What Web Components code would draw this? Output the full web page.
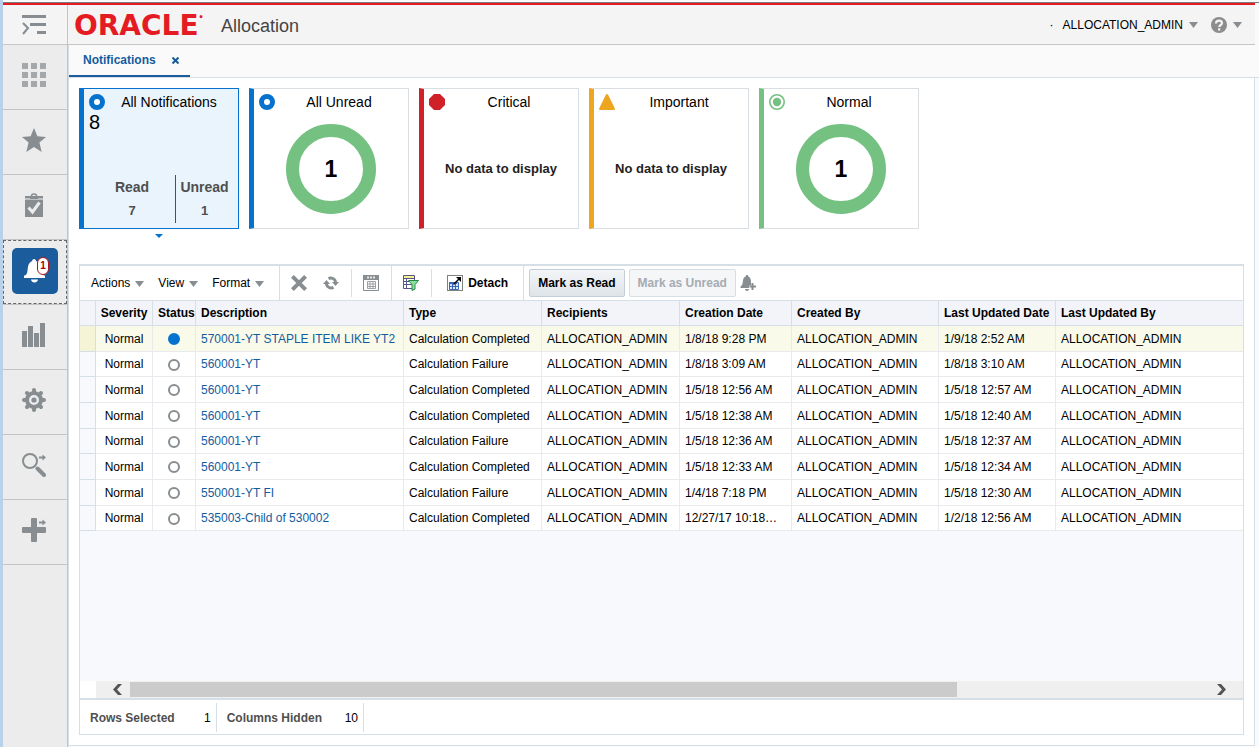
<!DOCTYPE html>
<html lang="en">
<head>
<meta charset="utf-8">
<meta name="viewport" content="width=device-width, initial-scale=1">
<title>Allocation - Notifications</title>
<style>
    :root {
        --line: #d6dfe6;
        --blue: #0572ce;
        --link: #145c9e;
        --gray: #878d90;
    }
    body {
        margin: 0;
        font: 12px/16px "Liberation Sans", Arial, sans-serif;
        color: #000;
    }
</style>
</head>
<body>
<allocation-app></allocation-app>

<script>
const ICONS = {
    menu: `<svg width="26" height="22" viewBox="0 0 26 22"><path fill="#878d90" d="M1 1h24v3H1zM9 9h16v3H9zM16 17h9v3h-9z"/><path fill="none" stroke="#878d90" stroke-width="2" d="M2 9l5 5-5 6"/></svg>`,
    grid: `<svg width="24" height="24" viewBox="0 0 24 24"><path fill="#a5a8ab" d="M0 0h6v6H0zM9 0h6v6H9zM18 0h6v6h-6zM0 9h6v6H0zM9 9h6v6H9zM18 9h6v6h-6zM0 18h6v6H0zM9 18h6v6H9zM18 18h6v6h-6z"/></svg>`,
    star: `<svg width="24" height="24" viewBox="0 0 24 24"><path fill="#878d90" d="M12 0l3.400 8.300 8.600.600-6.600 5.700 2.300 9.400-7.700-5-7.700 5 2.300-9.400L0 8.900l8.600-.600z"/></svg>`,
    tasks: `<svg width="24" height="26" viewBox="0 0 24 26"><path fill="#878d90" d="M3 4h18v21H3z"/><path fill="#bfc3c5" d="M3 6h18v2H3z"/><path fill="#878d90" d="M8 4h8v3H8z"/><path fill="none" stroke="#878d90" stroke-width="1.500" d="M9.500 4q0-2 2.500-2t2.500 2"/><path fill="none" stroke="#ececec" stroke-width="3" d="M6.500 15.500l4 4.500 7-9.500"/></svg>`,
    bell: `<svg width="24" height="26" viewBox="0 0 24 26"><path fill="#fff" d="M11 1c-1.200 0-1.800 1-1.800 2C5.500 4.500 5 8 4.600 12c-.3 3-1 4.500-2.600 5.500H1V20h21v-2.500h-1c-1.500-1-2.300-2.500-2.500-5.500C18 8 17 4.500 13 3c0-1-.8-2-2-2zM8 21.500h7c0 1.500-1.500 3-3.500 3S8 23 8 21.500z"/></svg>`,
    bars: `<svg width="24" height="24" viewBox="0 0 24 24"><path fill="#878d90" d="M0 8h5v16H0zM6 3h5v21H6zM12 10h5v14h-5zM18 0h5v24h-5z"/></svg>`,
    gear: `<svg width="24" height="24" viewBox="0 0 24 24"><g fill="none" stroke="#878d90"><circle cx="12" cy="12" r="7" stroke-width="4"/><g stroke-width="4" stroke-linecap="round"><path d="M12 4V2M12 20v2M4 12H2M20 12h2M6.300 6.300L5 5M17.700 6.300L19 5M6.300 17.700L5 19M17.700 17.700L19 19"/></g></g><circle cx="12" cy="12" r="2.600" fill="#878d90"/></svg>`,
    search: `<svg width="24" height="24" viewBox="0 0 24 24"><circle cx="8" cy="8" r="7" fill="none" stroke="#878d90" stroke-width="2"/><path stroke="#878d90" stroke-width="4" stroke-linecap="round" d="M15.500 15.500l6.500 6.500"/><path fill="#878d90" d="M17 3.500h3.500V1.500L24 4.500l-3.500 3v-2H17z"/></svg>`,
    plus: `<svg width="24" height="24" viewBox="0 0 24 24"><path fill="#878d90" d="M9 1q0-1 1-1h4q1 0 1 1v8h8q1 0 1 1v4q0 1-1 1h-8v8q0 1-1 1h-4q-1 0-1-1v-8H1q-1 0-1-1v-4q0-1 1-1h8z"/><path fill="#878d90" d="M17 3.500h3.500V1.500L24 4.500l-3.500 3v-2H17z"/></svg>`,
    close: `<svg width="7" height="7" viewBox="0 0 7 7"><path stroke="#145c9e" stroke-width="2" d="M.5.5l6 6M6.500.5l-6 6"/></svg>`,
    caret: `<svg width="9" height="7" viewBox="0 0 9 7"><path fill="#878d90" d="M0 1h9L4.500 7z"/></svg>`,
    help: `<svg width="16" height="16" viewBox="0 0 16 16"><circle cx="8" cy="8" r="8" fill="#8c8c8c"/><path fill="none" stroke="#f4f4f4" stroke-width="2.200" d="M5 6.500C5 4.500 6.300 3.700 8 3.700s3 .9 3 2.400c0 1.900-2.800 1.900-2.800 4"/><path fill="#f4f4f4" d="M7 11.300h2.300v2.200H7z"/></svg>`,
    ring: `<svg width="16" height="16" viewBox="0 0 16 16"><circle cx="8" cy="8" r="5.500" fill="#fff" stroke="#0572ce" stroke-width="5"/></svg>`,
    octagon: `<svg width="16" height="16" viewBox="0 0 16 16"><path fill="#cf2127" d="M5 0h6l5 5v6l-5 5H5l-5-5V5z"/></svg>`,
    triangle: `<svg width="16" height="16" viewBox="0 0 16 16"><path fill="#eea621" d="M7 .6Q8-.6 9 .6l7 14.200q0 1.200-1 1.200H1q-1 0-1-1.200z"/></svg>`,
    target: `<svg width="16" height="16" viewBox="0 0 16 16"><circle cx="8" cy="8" r="7.200" fill="#fff" stroke="#74c182" stroke-width="1.600"/><circle cx="8" cy="8" r="4.200" fill="#74c182"/></svg>`,
    remove: `<svg width="16" height="16" viewBox="0 0 16 16"><path stroke="#878d90" stroke-width="4" d="M1.400 1.400l13.200 13.200M14.600 1.400L1.400 14.600"/></svg>`,
    refresh: `<svg width="16" height="16" viewBox="0 0 16 16"><g fill="none" stroke="#878d90" stroke-width="3"><path d="M5.500 3.600A5 5 0 0 1 12.700 7"/><path d="M10.500 12.400A5 5 0 0 1 3.300 9"/></g><path fill="#878d90" d="M9 7h7l-3.500 4zM0 9h7L3.500 5z"/></svg>`,
    excel: `<svg width="16" height="16" viewBox="0 0 16 16"><path fill="#fff" stroke="#878d90" d="M.5.500h15v15H.500z"/><path fill="#878d90" d="M0 0h16v5H0z"/><path stroke="#e5e7e8" stroke-width="2" stroke-dasharray="2 1" d="M4 2.500h9"/><path fill="none" stroke="#9da2a4" d="M4.500 6.500h8v7h-8zM4 9h9M4 11.500h9M7 6v8M10 6v8"/></svg>`,
    filter: `<svg width="16" height="16" viewBox="0 0 16 16"><path fill="#fff" stroke="#55568e" d="M.5.500h11v13H.500z"/><path fill="#f6ef8c" d="M1 1h10v2H1z"/><path stroke="#55568e" d="M1 3.500h10M1 6.500h10M1 9.500h10M3.500 4v9"/><path fill="#8fe0a0" stroke="#238a45" d="M5.500 5.500h10l-3.500 4v4.500l-3 1.500V9.500z"/></svg>`,
    detach: `<svg width="16" height="16" viewBox="0 0 16 16"><path fill="none" stroke="#000" stroke-dasharray="1 1" d="M.5.500h15v15H.500z"/><path fill="#dce9fb" stroke="#3768b8" d="M2.500 7.500h9v7h-9z"/><path fill="#3768b8" d="M2 7h8v2H2z"/><path stroke="#3768b8" d="M3 11.500h8M5.500 9v5M8.500 9v5"/><path fill="none" stroke="#000" stroke-width="1.500" d="M6.500 9.500L12 4"/><path fill="#000" d="M9 2h5v5z"/></svg>`,
    bellAdd: `<svg width="16" height="16" viewBox="0 0 16 16"><path fill="#878d90" d="M7 0C6 0 5.700.700 5.700 1.500 3.500 2.300 3 4.500 2.800 7 2.600 9.500 2 10.500.500 11.500V13H9v-2.500h2V7.500C11 4.500 10.500 2.300 8.300 1.500 8.300.700 8 0 7 0zM5 14h4c0 1-1 2-2 2s-2-1-2-2z"/><path stroke="#878d90" stroke-width="2" d="M12.500 8v7M9.500 11.500h6.500"/></svg>`,
    left: `<svg width="9" height="11" viewBox="0 0 9 11"><path fill="#555" d="M5 0h4L4 5.500 9 11H5L0 5.500z"/></svg>`,
    right: `<svg width="9" height="11" viewBox="0 0 9 11"><path fill="#555" d="M4 0H0l5 5.500L0 11h4l5-5.500z"/></svg>`
};

const RESET = `
    :host { box-sizing: border-box; }
    *, *::before, *::after { box-sizing: border-box; }
    button {
        margin: 0;
        padding: 0;
        border: none;
        background: none;
        font: inherit;
        color: inherit;
        cursor: pointer;
    }
    svg { display: block; flex: none; }
`;

class BaseElement extends HTMLElement {
    constructor(){
        super();
        this.attachShadow({ mode: "open" });
    }
    connectedCallback(){
        this.shadowRoot.innerHTML = `<style>${RESET}${this.getStyle()}</style>${this.getTemplate()}`;
    }
}

class SvgIcon extends BaseElement {
    getStyle(){
        return `:host { display: inline-flex; flex: none; }`;
    }
    getTemplate(){
        return ICONS[this.getAttribute("name")] || "";
    }
}

class AppHeader extends BaseElement {
    getStyle(){
        return `
            :host {
                display: flex;
                align-items: stretch;
                height: 42px;
                margin-right: 4px;
                border-top: 2px solid #e51b24;
                border-bottom: 1px solid #c6c6c6;
                background: #f4f4f4;
            }
            .toggle {
                display: grid;
                place-items: center;
                width: 65px;
                padding-right: 2px;
                border-right: 1px solid #c4c4c4;
            }
            .brand {
                display: flex;
                flex: 1;
                align-items: center;
                padding: 2px 0 0 6px;
            }
            .logo {
                display: flex;
                width: 147px;
                font: bold 28px/28px "DejaVu Sans", sans-serif;
                color: #e51b24;
            }
            .logo sup { font-size: 8px; line-height: 12px; }
            h1 {
                margin: 0;
                font-size: 18px;
                line-height: 24px;
                font-weight: normal;
                color: #444;
            }
            .user {
                display: flex;
                align-items: center;
                gap: 13px;
                padding-right: 13px;
            }
            .user button {
                display: flex;
                align-items: center;
                gap: 6px;
            }
            .dot { margin-right: -4px; }
        `;
    }
    getTemplate(){
        return `
            <button class="toggle" aria-label="Toggle menu"><svg-icon name="menu"></svg-icon></button>
            <div class="brand">
                <span class="logo">ORACLE<sup>•</sup></span>
                <h1>Allocation</h1>
            </div>
            <div class="user">
                <span class="dot">·</span>
                <button>ALLOCATION_ADMIN <svg-icon name="caret"></svg-icon></button>
                <button aria-label="Help"><svg-icon name="help"></svg-icon><svg-icon name="caret"></svg-icon></button>
            </div>
        `;
    }
}

class NavItem extends BaseElement {
    getStyle(){
        return `
            :host { display: block; border-bottom: 1px solid #c4c4c4; }
            button {
                display: grid;
                place-items: center;
                width: 100%;
                height: 64px;
                padding-right: 2px;
            }
            .tile { position: relative; }
            :host([selected]) button {
                padding: 0 0 2px;
                outline: 1px dashed #666;
                outline-offset: -1px;
            }
            :host([selected]) .tile {
                display: grid;
                place-items: center;
                width: 46px;
                height: 46px;
                border-radius: 5px;
                background: #1a5c9c;
            }
            .badge {
                position: absolute;
                top: 9px;
                left: 25px;
                width: 12px;
                height: 18px;
                border: 1px solid #b3131b;
                border-radius: 6px;
                background: #fff;
                font: bold 10px/15px "Liberation Sans", sans-serif;
                text-align: center;
                color: #a00;
            }
        `;
    }
    getTemplate(){
        const count = this.getAttribute("count");
        return `
            <button aria-label="${this.getAttribute("label")}">
                <span class="tile">
                    <svg-icon name="${this.getAttribute("icon")}"></svg-icon>
                    ${count ? `<span class="badge">${count}</span>` : ""}
                </span>
            </button>
        `;
    }
}

class NavRail extends BaseElement {
    getStyle(){
        return `
            :host {
                display: block;
                background: #ececec;
                border-right: 1px solid #c4c4c4;
            }
            nav { display: flex; flex-direction: column; }
        `;
    }
    getTemplate(){
        return `<nav><slot></slot></nav>`;
    }
}

class TabBar extends BaseElement {
    getStyle(){
        return `
            :host {
                display: flex;
                height: 33px;
                border-bottom: 1px solid var(--line);
                background: #fafafa;
            }
            .tab {
                display: flex;
                align-items: center;
                gap: 16px;
                padding: 0 11px 0 14px;
                border-bottom: 2px solid #1a5c9c;
                font-weight: bold;
                color: var(--link);
            }
        `;
    }
    getTemplate(){
        return `
            <div class="tab">
                <slot></slot>
                <button aria-label="Close tab"><svg-icon name="close"></svg-icon></button>
            </div>
        `;
    }
}

class NotificationCard extends BaseElement {
    getStyle(){
        return `
            :host {
                display: block;
                width: 160px;
                --accent: var(--blue);
            }
            :host([severity="critical"]) { --accent: #cf2127; }
            :host([severity="important"]) { --accent: #eea621; }
            :host([severity="normal"]) { --accent: #74c182; }
            .card {
                display: flex;
                flex-direction: column;
                width: 100%;
                height: 141px;
                padding: 5px 5px 0;
                border: 1px solid #d9dee3;
                border-left: 5px solid var(--accent);
                background: #fff;
            }
            :host([selected]) .card {
                border-color: var(--blue);
                background: #e9f4fd;
            }
            .head { display: flex; align-self: stretch; }
            .title {
                flex: 1;
                font-size: 14px;
                text-align: center;
            }
            .content {
                display: grid;
                flex: 1;
                align-self: stretch;
                place-items: center stretch;
            }
            :host([selected])::after {
                content: "";
                display: block;
                width: 0;
                margin: 5px auto 0;
                border: 4px solid transparent;
                border-top-color: var(--blue);
                border-bottom: none;
            }
        `;
    }
    getTemplate(){
        return `
            <button class="card">
                <span class="head">
                    <svg-icon name="${this.getAttribute("icon")}"></svg-icon>
                    <span class="title">${this.getAttribute("title-text")}</span>
                </span>
                <span class="content"><slot></slot></span>
            </button>
        `;
    }
}

class DonutCount extends BaseElement {
    getStyle(){
        return `
            :host {
                display: grid;
                place-items: center;
                justify-self: center;
                width: 90px;
                height: 90px;
                border: 13px solid #74c182;
                border-radius: 50%;
                font-size: 23px;
                line-height: 28px;
                font-weight: bold;
            }
        `;
    }
    getTemplate(){
        return `<slot></slot>`;
    }
}

class EmptyMessage extends BaseElement {
    getStyle(){
        return `
            :host {
                display: block;
                font-size: 13px;
                font-weight: bold;
                text-align: center;
                color: #222;
            }
        `;
    }
    getTemplate(){
        return `No data to display`;
    }
}

class ReadSummary extends BaseElement {
    getStyle(){
        return `
            :host {
                display: flex;
                flex-direction: column;
                justify-content: space-between;
                align-self: stretch;
                padding-bottom: 5px;
            }
            .total { font-size: 20px; line-height: 24px; text-align: left; }
            .counts {
                display: grid;
                grid-template-columns: 86px 1fr;
                font-size: 14px;
                line-height: 24px;
                font-weight: bold;
                text-align: center;
                color: #4f4f4f;
            }
            .counts > span { display: grid; }
            .counts > span + span { border-left: 1px solid #4f4f4f; }
            .num { font-size: 13px; }
        `;
    }
    getTemplate(){
        return `
            <span class="total">${this.getAttribute("total")}</span>
            <span class="counts">
                <span>Read <span class="num">${this.getAttribute("read")}</span></span>
                <span>Unread <span class="num">${this.getAttribute("unread")}</span></span>
            </span>
        `;
    }
}

class TableToolbar extends BaseElement {
    getStyle(){
        return `
            :host {
                display: flex;
                height: 34px;
                background: #fff;
            }
            .group {
                display: flex;
                align-items: center;
                gap: 16px;
                padding: 0 12px 0 11px;
                border-right: 1px solid var(--line);
            }
            .group.menus { gap: 14px; padding-right: 15px; }
            .group.short { margin: 3px 0; }
            .group.wide { padding: 0 15px; }
            .group.last { gap: 4px; padding: 0 5px; border: none; }
            .group button { display: flex; align-items: center; gap: 5px; }
            .bold { font-weight: bold; }
            .group .push {
                height: 28px;
                padding: 0 8px;
                border: 1px solid #c4ced7;
                border-radius: 2px;
                background: linear-gradient(#f3f5f8, #dfe4e9);
                font-weight: bold;
            }
            .group .push:disabled {
                border-color: #d6dfe6;
                background: #f4f6f8;
                color: #a6abb0;
                cursor: default;
            }
        `;
    }
    getTemplate(){
        return `
            <div class="group menus">
                <button>Actions <svg-icon name="caret"></svg-icon></button>
                <button>View <svg-icon name="caret"></svg-icon></button>
                <button>Format <svg-icon name="caret"></svg-icon></button>
            </div>
            <div class="group short">
                <button aria-label="Delete"><svg-icon name="remove"></svg-icon></button>
                <button aria-label="Refresh"><svg-icon name="refresh"></svg-icon></button>
            </div>
            <div class="group">
                <button aria-label="Export to Excel"><svg-icon name="excel"></svg-icon></button>
            </div>
            <div class="group short">
                <button aria-label="Query by Example"><svg-icon name="filter"></svg-icon></button>
            </div>
            <div class="group wide">
                <button class="bold"><svg-icon name="detach"></svg-icon> Detach</button>
            </div>
            <div class="group last">
                <button class="push">Mark as Read</button>
                <button class="push" disabled>Mark as Unread</button>
                <button aria-label="Add notification"><svg-icon name="bellAdd"></svg-icon></button>
            </div>
        `;
    }
}

const USER = "ALLOCATION_ADMIN";
const ROWS = [
    ["570001-YT STAPLE ITEM LIKE YT2", "Calculation Completed", "1/8/18 9:28 PM", "1/9/18 2:52 AM"],
    ["560001-YT", "Calculation Failure", "1/8/18 3:09 AM", "1/8/18 3:10 AM"],
    ["560001-YT", "Calculation Completed", "1/5/18 12:56 AM", "1/5/18 12:57 AM"],
    ["560001-YT", "Calculation Completed", "1/5/18 12:38 AM", "1/5/18 12:40 AM"],
    ["560001-YT", "Calculation Failure", "1/5/18 12:36 AM", "1/5/18 12:37 AM"],
    ["560001-YT", "Calculation Completed", "1/5/18 12:33 AM", "1/5/18 12:34 AM"],
    ["550001-YT FI", "Calculation Failure", "1/4/18 7:18 PM", "1/5/18 12:30 AM"],
    ["535003-Child of 530002", "Calculation Completed", "12/27/17 10:18…", "1/2/18 12:56 AM"]
];

class NotificationTable extends BaseElement {
    getStyle(){
        return `
            :host {
                display: block;
                flex: 1;
                border-top: 1px solid var(--line);
                background: #f7f9fd;
            }
            table {
                width: 100%;
                table-layout: fixed;
                border-spacing: 0;
            }
            th, td {
                height: 26px;
                padding: 0 0 0 5px;
                border-right: 1px solid #e8eaed;
                border-bottom: 1px solid #e8eaed;
                text-align: left;
                white-space: nowrap;
            }
            tr:nth-child(3n+2) td { height: 25px; }
            th {
                height: 25px;
                border-color: var(--line);
                background: #f2f4f9;
            }
            td { background: #fff; }
            th:last-child, td:last-child { border-right: none; }
            td:first-child { border-color: var(--line); background: #f7f9fd; }
            .severity, td.status { padding: 0; text-align: center; }
            .selected td { background: #f9faea; }
            .selected td:first-child { background: #f5f4d6; }
            a { color: var(--link); text-decoration: none; }
            .mark {
                display: block;
                width: 12px;
                height: 12px;
                margin: 1px auto 0;
                border: 2px solid #878d90;
                border-radius: 50%;
                background: #fff;
            }
            .selected .mark { border-color: var(--blue); background: var(--blue); }
        `;
    }
    getRow([description, type, created, updated], i){
        return `
            <tr class="${i === 0 ? "selected" : ""}">
                <td></td>
                <td class="severity">Normal</td>
                <td class="status"><span class="mark" role="img" aria-label="${i === 0 ? "Unread" : "Read"}"></span></td>
                <td><a href="#">${description}</a></td>
                <td>${type}</td>
                <td>${USER}</td>
                <td>${created}</td>
                <td>${USER}</td>
                <td>${updated}</td>
                <td>${USER}</td>
            </tr>
        `;
    }
    getTemplate(){
        const widths = [16, 57, 43, 208, 138, 138, 112, 147, 117];
        return `
            <table>
                <colgroup>${widths.map(w => `<col style="width: ${w}px">`).join("")}<col></colgroup>
                <thead>
                    <tr>
                        <th></th>
                        <th class="severity">Severity</th>
                        <th class="status">Status</th>
                        <th>Description</th>
                        <th>Type</th>
                        <th>Recipients</th>
                        <th>Creation Date</th>
                        <th>Created By</th>
                        <th>Last Updated Date</th>
                        <th>Last Updated By</th>
                    </tr>
                </thead>
                <tbody>${ROWS.map(this.getRow).join("")}</tbody>
            </table>
        `;
    }
}

class ScrollTrack extends BaseElement {
    getStyle(){
        return `
            :host {
                display: flex;
                height: 17px;
                margin-left: 16px;
                background: #efefef;
            }
            button { display: grid; align-items: center; width: 34px; padding: 0 8px; }
            .prev { justify-items: end; }
            .track { flex: 1; padding: 1px 0; }
            .thumb { width: 76.6%; height: 15px; background: #cbcbcb; }
        `;
    }
    getTemplate(){
        return `
            <button class="prev" aria-label="Scroll left"><svg-icon name="left"></svg-icon></button>
            <div class="track"><div class="thumb"></div></div>
            <button class="next" aria-label="Scroll right"><svg-icon name="right"></svg-icon></button>
        `;
    }
}

class StatusBar extends BaseElement {
    getStyle(){
        return `
            :host {
                display: flex;
                height: 36px;
                padding: 3px 0 2px;
                border-top: 2px solid var(--line);
                background: #fff;
            }
            .item {
                display: flex;
                align-items: center;
                padding: 0 5px 0 10px;
                border-right: 1px solid var(--line);
            }
            .label { font-weight: bold; color: #4f4f4f; }
            .value { width: 36px; text-align: right; }
        `;
    }
    getTemplate(){
        return `
            <div class="item"><span class="label">Rows Selected</span><span class="value">1</span></div>
            <div class="item"><span class="label">Columns Hidden</span><span class="value">10</span></div>
        `;
    }
}

class AllocationApp extends BaseElement {
    getStyle(){
        return `
            :host {
                display: flex;
                flex-direction: column;
                min-height: 100vh;
                padding-top: 2px;
                border-left: 3px solid #b9d1ea;
                background: #fafafa;
            }
            .frame { border-top: 1px solid #7d7d80; }
            .layout {
                display: grid;
                flex: 1;
                grid-template-columns: 65px minmax(0, 1fr);
            }
            main {
                display: flex;
                flex-direction: column;
                border-left: 1px solid var(--line);
            }
            .panel {
                display: flex;
                flex: 1;
                flex-direction: column;
                gap: 26px;
                margin: 0 4px 1px 0;
                padding: 10px;
                border: 1px solid var(--line);
                border-width: 0 1px 1px 0;
                background: #fff;
            }
            .cards { display: flex; gap: 10px; min-height: 150px; }
            .data {
                display: flex;
                flex: 1;
                flex-direction: column;
                border: 1px solid var(--line);
                border-top-width: 2px;
            }
        `;
    }
    getTemplate(){
        return `
            <div class="frame"><app-header></app-header></div>
            <div class="layout">
                <nav-rail>
                    <nav-item icon="grid" label="Applications"></nav-item>
                    <nav-item icon="star" label="Favorites"></nav-item>
                    <nav-item icon="tasks" label="Tasks"></nav-item>
                    <nav-item icon="bell" label="Notifications" count="1" selected></nav-item>
                    <nav-item icon="bars" label="Reports"></nav-item>
                    <nav-item icon="gear" label="Settings"></nav-item>
                    <nav-item icon="search" label="Search"></nav-item>
                    <nav-item icon="plus" label="Create"></nav-item>
                </nav-rail>
                <main>
                    <tab-bar>Notifications</tab-bar>
                    <div class="panel">
                        <div class="cards">
                            <notification-card title-text="All Notifications" icon="ring" selected>
                                <read-summary total="8" read="7" unread="1"></read-summary>
                            </notification-card>
                            <notification-card title-text="All Unread" icon="ring">
                                <donut-count>1</donut-count>
                            </notification-card>
                            <notification-card title-text="Critical" icon="octagon" severity="critical">
                                <empty-message></empty-message>
                            </notification-card>
                            <notification-card title-text="Important" icon="triangle" severity="important">
                                <empty-message></empty-message>
                            </notification-card>
                            <notification-card title-text="Normal" icon="target" severity="normal">
                                <donut-count>1</donut-count>
                            </notification-card>
                        </div>
                        <section class="data">
                            <table-toolbar></table-toolbar>
                            <notification-table></notification-table>
                            <scroll-track></scroll-track>
                            <status-bar></status-bar>
                        </section>
                    </div>
                </main>
            </div>
        `;
    }
}

customElements.define("svg-icon", SvgIcon)
customElements.define("app-header", AppHeader)
customElements.define("nav-item", NavItem)
customElements.define("nav-rail", NavRail)
customElements.define("tab-bar", TabBar)
customElements.define("notification-card", NotificationCard)
customElements.define("donut-count", DonutCount)
customElements.define("empty-message", EmptyMessage)
customElements.define("read-summary", ReadSummary)
customElements.define("table-toolbar", TableToolbar)
customElements.define("notification-table", NotificationTable)
customElements.define("scroll-track", ScrollTrack)
customElements.define("status-bar", StatusBar)
customElements.define("allocation-app", AllocationApp)
</script>
</body>
</html>
